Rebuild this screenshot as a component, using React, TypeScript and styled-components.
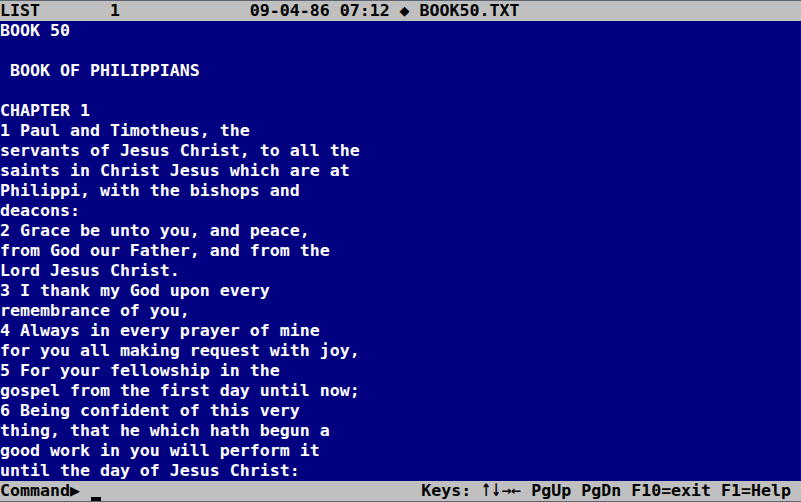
import React from 'react';
import styled, { createGlobalStyle } from 'styled-components';

const GlobalStyle = createGlobalStyle`
  html, body {
    margin: 0;
    padding: 0;
    background: #000080;
    overflow: hidden;
  }
`;

const Screen = styled.div`
  width: 801px;
  height: 502px;
  display: flex;
  flex-direction: column;
  font-family: 'DejaVu Sans Mono', 'Liberation Mono', monospace;
  font-size: 16.6px;
  font-weight: bold;
  line-height: 20px;
  white-space: pre;
  border-top: 1px solid #5c6472;
  border-bottom: 1px solid #5c6472;
  box-sizing: border-box;
`;

const Bar = styled.div`
  height: 20px;
  background: #c0c0c0;
  color: #000;
  display: flex;
`;

const Body = styled.div`
  flex: 1;
  background: #000080;
  color: #fff;
`;

const Line = styled.div`
  height: 20px;
`;

const Pointer = styled.span`
  display: inline-block;
  width: 10px;
  text-align: center;
`;

const Cursor = styled.span`
  display: inline-block;
  width: 10px;
  height: 20px;
  position: relative;
  vertical-align: top;
  &::after {
    content: '';
    position: absolute;
    left: 1px;
    right: -1px;
    bottom: 0;
    height: 4px;
    background: #000;
  }
`;

const Spacer = styled.span`
  flex: 1;
`;

const Arrow = styled.span<{ $tall?: boolean }>`
  font-family: 'DejaVu Sans', sans-serif;
  font-size: 12px;
  font-weight: bold;
  display: inline-block;
  width: 10px;
  text-align: center;
  transform: ${p => (p.$tall ? 'translateY(-1px) scaleY(1.45)' : 'none')};
`;

const lines = [
  'BOOK 50',
  '',
  ' BOOK OF PHILIPPIANS',
  '',
  'CHAPTER 1',
  '1 Paul and Timotheus, the',
  'servants of Jesus Christ, to all the',
  'saints in Christ Jesus which are at',
  'Philippi, with the bishops and',
  'deacons:',
  '2 Grace be unto you, and peace,',
  'from God our Father, and from the',
  'Lord Jesus Christ.',
  '3 I thank my God upon every',
  'remembrance of you,',
  '4 Always in every prayer of mine',
  'for you all making request with joy,',
  '5 For your fellowship in the',
  'gospel from the first day until now;',
  '6 Being confident of this very',
  'thing, that he which hath begun a',
  'good work in you will perform it',
  'until the day of Jesus Christ:',
];

const App = () => (
  <>
    <GlobalStyle />
    <Screen>
      <Bar>
        <span>{'LIST       1             09-04-86 07:12 \u25C6 BOOK50.TXT'}</span>
      </Bar>
      <Body>
        {lines.map((l, i) => (
          <Line key={i}>{l}</Line>
        ))}
      </Body>
      <Bar>
        <span>Command</span>
        <Pointer>{'\u25B6'}</Pointer>
        <span> </span>
        <Cursor />
        <Spacer />
        <span>{'Keys: '}</span>
        <Arrow $tall>{'\u2191'}</Arrow>
        <Arrow $tall>{'\u2193'}</Arrow>
        <Arrow>{'\u2192'}</Arrow>
        <Arrow>{'\u2190'}</Arrow>
        <span>{' PgUp PgDn F10=exit F1=Help '}</span>
      </Bar>
    </Screen>
  </>
);

export default App;
